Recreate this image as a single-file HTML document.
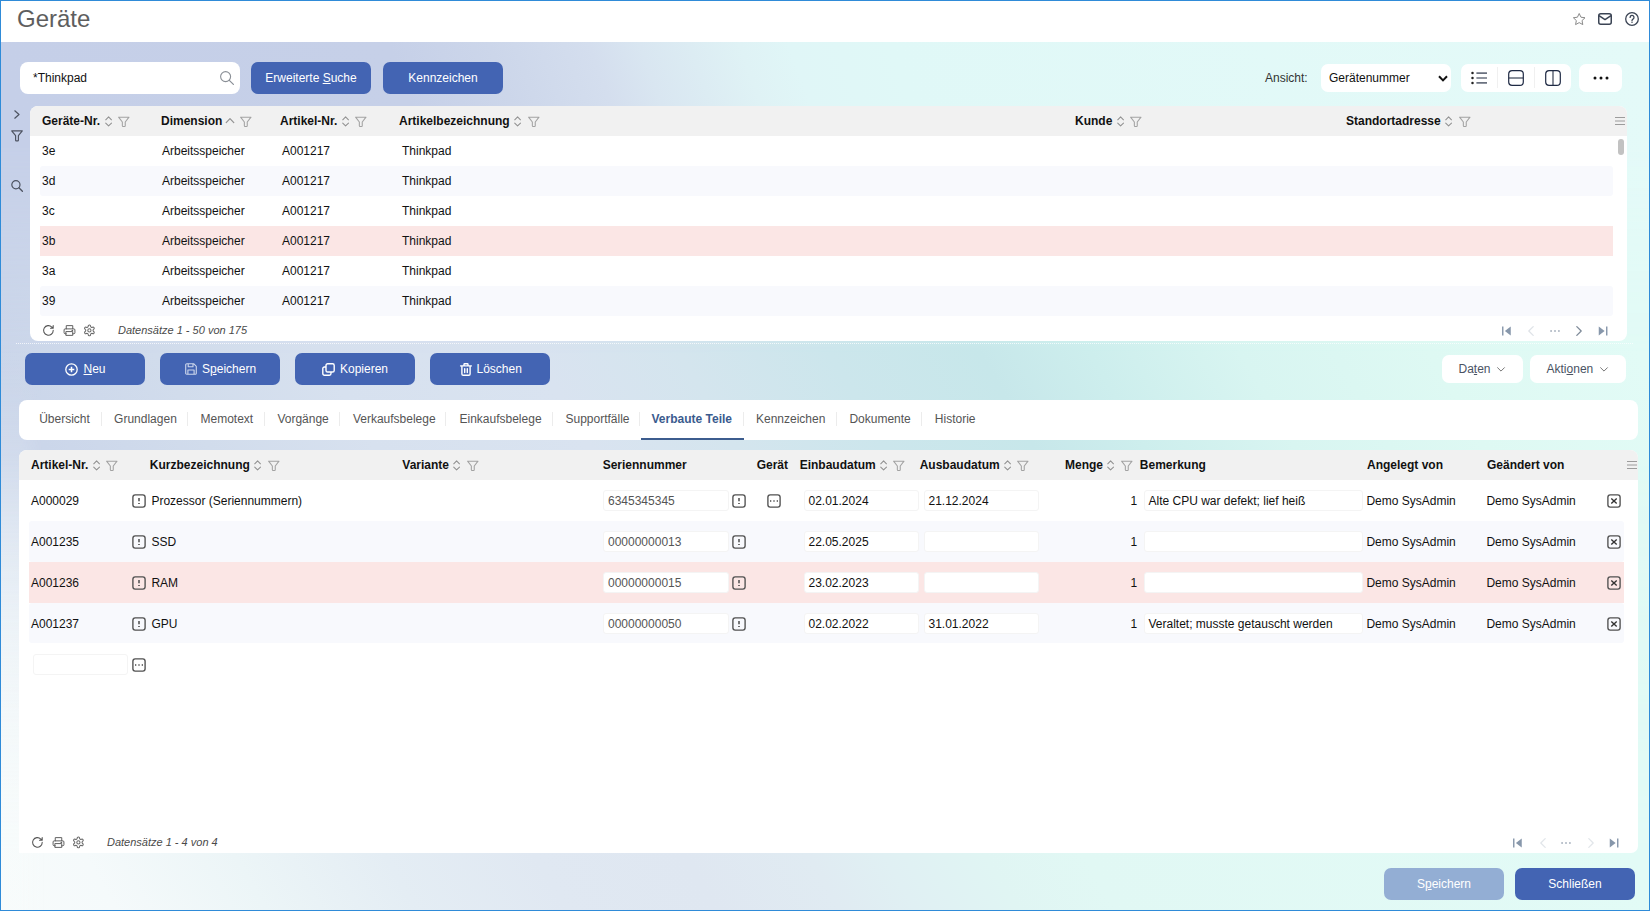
<!DOCTYPE html>
<html lang="de">
<head>
<meta charset="utf-8">
<title>Geräte</title>
<style>
*{box-sizing:border-box;margin:0;padding:0}
html,body{width:1650px;height:911px;overflow:hidden}
body{font-family:"Liberation Sans",Arial,sans-serif;font-size:12px;color:#111;position:relative;background:#dfeaf2}
.abs{position:absolute}
#bgw{position:absolute;left:0;top:42px;width:1650px;height:869px;overflow:hidden}
#bg,#bgt,#bgb{position:absolute;left:-700px;top:0;width:3050px;height:869px;transform:skewX(30deg)}
#bg{transform-origin:0 328px;background:linear-gradient(90deg,#cbd6ea 700px,#d1dcec 865px,#d7e1ef 1030px,#d9e3f0 1245px,#d4e5ee 1390px,#cce6ec 1540px,#c7e7ea 1690px,#cdeeed 1800px,#d8f5f1 1950px,#def9f3 2140px,#e2fbf6 2350px)}
#bgt{transform:skewX(20deg);transform-origin:0 32px;background:linear-gradient(90deg,#c5cfe8 700px,#c6d0e8 1100px,#ccd6ea 1200px,#d4deee 1300px,#d9e6f1 1350px,#dcecf3 1400px,#dff2f5 1450px,#e0f6f7 1500px,#e0f8f7 1600px,#e4faf8 2350px);
-webkit-mask-image:linear-gradient(180deg,#000 0%,#000 12%,rgba(0,0,0,0) 36%);mask-image:linear-gradient(180deg,#000 0%,#000 12%,rgba(0,0,0,0) 36%)}
#bgb{transform-origin:0 840px;background:linear-gradient(90deg,#f7fbfb 700px,#f5fafb 800px,#ecf5f7 950px,#e4edf4 1100px,#e0e8f2 1250px,#dfe7f1 1400px,#e0ebf2 1525px,#e0f0f3 1600px,#e0f5f3 1700px,#e1f8f4 1800px,#e2fbf6 2350px);
-webkit-mask-image:linear-gradient(180deg,rgba(0,0,0,0) 48%,#000 93%);mask-image:linear-gradient(180deg,rgba(0,0,0,0) 48%,#000 93%)}
#bgl{position:absolute;left:0;top:298px;width:44px;height:571px;background:linear-gradient(180deg,rgba(245,249,251,0) 10px,rgba(245,249,251,.05) 60px,rgba(245,249,251,.14) 110px,rgba(245,249,251,.3) 160px,rgba(245,249,251,.45) 210px,rgba(247,251,251,.68) 310px,rgba(247,251,251,.8) 410px,rgba(247,251,251,.9) 510px,rgba(247,251,251,.9) 571px);-webkit-mask-image:linear-gradient(90deg,#000 0,#000 45%,rgba(0,0,0,0) 100%);mask-image:linear-gradient(90deg,#000 0,#000 45%,rgba(0,0,0,0) 100%)}
#hdr{position:absolute;left:0;top:0;width:1650px;height:42px;background:#fff}
#frame{position:absolute;left:0;top:0;width:1650px;height:911px;border:1px solid #2f8bd8;pointer-events:none;z-index:50}
h1{position:absolute;left:17px;top:4px;font-size:24px;font-weight:normal;color:#5e5e5e;line-height:30px}
.btn{position:absolute;height:32px;border-radius:7px;background:#4364b3;color:#fff;font-size:12px;line-height:32px;white-space:nowrap}
.btn.c{text-align:center}
.btn.dis{background:#93aed4}
.btn span,.wbtn span{position:absolute;top:0}
.wbtn{position:absolute;height:28px;border-radius:7px;background:#fff;color:#4a5363;font-size:12px;line-height:28px;white-space:nowrap}
u{text-decoration:underline;text-underline-offset:1px;text-decoration-thickness:1px}
.panel{position:absolute;background:#fff;border-radius:8px;overflow:hidden}
.gh{position:absolute;left:0;top:0;right:0;height:30px;background:#f1f1f1}
.th{position:absolute;top:0;height:30px;line-height:30px;font-weight:bold;font-size:12px;color:#111;white-space:nowrap}
.row{position:absolute;left:10px;height:30px;line-height:30px}
.row span,.row2 span{position:absolute;top:0;white-space:nowrap}
.row2 span{top:1px}
.alt{background:#f8f9fd;border-radius:3px}
.sel{background:#fbe6e5}
.row2{position:absolute;left:10px;height:41px;line-height:41px}
.inp{position:absolute;height:21px;background:#fff;border:1px solid #f4f4f4;border-radius:3px;line-height:21px;padding-left:4px;white-space:nowrap;overflow:hidden;top:10px}
.foot{position:absolute;font-style:italic;color:#4a4a4a;font-size:11px;white-space:nowrap;line-height:14px}
svg{position:absolute;overflow:visible}
.tab{position:absolute;top:0;height:40px;line-height:38px;color:#555;font-size:12px;white-space:nowrap}
.tab.act{font-weight:bold;color:#3b5b8e}
.sep{position:absolute;top:12px;width:1px;height:14px;background:#ececec}
</style>
</head>
<body>

<svg width="0" height="0" style="position:absolute">
<defs>
<symbol id="i-sort" viewBox="0 0 8 12" overflow="visible"><path d="M0.8 4.2 L4 1 L7.2 4.2 M0.8 7.8 L4 11 L7.2 7.8" fill="none" stroke="#929292" stroke-width="1.2" stroke-linecap="round" stroke-linejoin="round"/></symbol>
<symbol id="i-asc" viewBox="0 0 8 12" overflow="visible"><path d="M0.2 7.6 L4 3.6 L7.8 7.6" fill="none" stroke="#929292" stroke-width="1.2" stroke-linecap="round" stroke-linejoin="round"/></symbol>
<symbol id="i-filt" viewBox="0 0 12 12" overflow="visible"><path d="M0.6 1.2 H11.4 L7.5 6.2 V10 Q7.5 10.8 6.7 10.8 H5.3 Q4.5 10.8 4.5 10 V6.2 Z" fill="none" stroke="#a2a2a2" stroke-width="1.1" stroke-linejoin="round"/></symbol>
<symbol id="i-ham" viewBox="0 0 10 8" overflow="visible"><path d="M0 0.5 H10 M0 4 H10 M0 7.5 H10" fill="none" stroke="#9c9c9c" stroke-width="1"/></symbol>
<symbol id="i-refresh" viewBox="0 0 24 24" overflow="visible"><path d="M21 12a9 9 0 1 1-2.64-6.36L21 8 M21 3v5h-5" fill="none" stroke="#555" stroke-width="2" stroke-linecap="round" stroke-linejoin="round"/></symbol>
<symbol id="i-print" viewBox="0 0 24 24" overflow="visible"><path d="M6 9V3h12v6 M6 18H4a2 2 0 0 1-2-2v-5a2 2 0 0 1 2-2h16a2 2 0 0 1 2 2v5a2 2 0 0 1-2 2h-2 M6 14h12v7H6z M16.5 12h1.5" fill="none" stroke="#5c5c5c" stroke-width="1.8" stroke-linecap="round" stroke-linejoin="round"/></symbol>
<symbol id="i-gear" viewBox="0 0 24 24" overflow="visible"><path d="M12.22 2h-.44a2 2 0 0 0-2 2v.18a2 2 0 0 1-1 1.73l-.43.25a2 2 0 0 1-2 0l-.15-.08a2 2 0 0 0-2.73.73l-.22.38a2 2 0 0 0 .73 2.73l.15.1a2 2 0 0 1 1 1.72v.51a2 2 0 0 1-1 1.74l-.15.09a2 2 0 0 0-.73 2.73l.22.38a2 2 0 0 0 2.73.73l.15-.08a2 2 0 0 1 2 0l.43.25a2 2 0 0 1 1 1.73V20a2 2 0 0 0 2 2h.44a2 2 0 0 0 2-2v-.18a2 2 0 0 1 1-1.73l.43-.25a2 2 0 0 1 2 0l.15.08a2 2 0 0 0 2.73-.73l.22-.39a2 2 0 0 0-.73-2.73l-.15-.08a2 2 0 0 1-1-1.74v-.5a2 2 0 0 1 1-1.74l.15-.09a2 2 0 0 0 .73-2.73l-.22-.38a2 2 0 0 0-2.73-.73l-.15.08a2 2 0 0 1-2 0l-.43-.25a2 2 0 0 1-1-1.73V4a2 2 0 0 0-2-2z" fill="none" stroke="#6a6a6a" stroke-width="2" stroke-linejoin="round"/><circle cx="12" cy="12" r="3" fill="none" stroke="#6a6a6a" stroke-width="2"/></symbol>
<symbol id="i-first" viewBox="0 0 10 10" overflow="visible"><path d="M0.8 0.3 V9.7" stroke="#8797ab" stroke-width="1.5" fill="none"/><path d="M9.2 0.3 V9.7 L3 5 Z" fill="#8797ab"/></symbol>
<symbol id="i-last" viewBox="0 0 10 10" overflow="visible"><path d="M9.2 0.3 V9.7" stroke="#8797ab" stroke-width="1.5" fill="none"/><path d="M0.8 0.3 V9.7 L7 5 Z" fill="#8797ab"/></symbol>
<symbol id="i-info" viewBox="0 0 14 14" overflow="visible"><rect x="0.9" y="0.9" width="12.2" height="12.2" rx="2.3" fill="none" stroke="#505050" stroke-width="1.35"/><path d="M7 3.9 V7.3" stroke="#4a4a4a" stroke-width="1.5" fill="none"/><path d="M6.2 9.5 H7.8" stroke="#4a4a4a" stroke-width="1.1" fill="none"/></symbol>
<symbol id="i-more" viewBox="0 0 14 14" overflow="visible"><rect x="0.9" y="0.9" width="12.2" height="12.2" rx="2.3" fill="none" stroke="#505050" stroke-width="1.35"/><path d="M3 7 H4.3 M6.35 7 H7.65 M9.7 7 H11" stroke="#4a4a4a" stroke-width="1.4" fill="none"/></symbol>
<symbol id="i-xbox" viewBox="0 0 14 14" overflow="visible"><rect x="0.9" y="0.9" width="12.2" height="12.2" rx="2.3" fill="none" stroke="#505050" stroke-width="1.35"/><path d="M4.3 4.6 L9.7 9.6 M9.7 4.6 L4.3 9.6" stroke="#333" stroke-width="1.4" fill="none"/></symbol>
</defs>
</svg>

<div id="bgw"><div id="bg"></div><div id="bgt"></div><div id="bgb"></div><div id="bgl"></div></div>
<div id="hdr"></div>
<h1>Geräte</h1>
<svg style="left:1572.3px;top:11.6px" width="14.4" height="14.4" viewBox="0 0 24 24"><path d="M12 2.5l2.95 6.2 6.75.9-4.95 4.7 1.25 6.7L12 17.7 5.99 21l1.25-6.7L2.3 9.6l6.75-.9z" fill="none" stroke="#7d7d7d" stroke-width="1.5" stroke-linejoin="round"/></svg>
<svg style="left:1598px;top:13px" width="14" height="12" viewBox="0 0 14 12"><rect x="0.75" y="0.75" width="12.5" height="10.5" rx="2" fill="none" stroke="#3b4454" stroke-width="1.5"/><path d="M1 2.6 L7 6.6 L13 2.6" fill="none" stroke="#3b4454" stroke-width="1.5" stroke-linejoin="round"/></svg>
<svg style="left:1625px;top:12px" width="14" height="14" viewBox="0 0 14 14"><circle cx="7" cy="7" r="6.3" fill="none" stroke="#3b4454" stroke-width="1.3"/><path d="M5.1 5.4a1.95 1.95 0 1 1 2.9 1.7c-.6.35-1 .75-1 1.5" fill="none" stroke="#3b4454" stroke-width="1.3" stroke-linecap="round"/><circle cx="7" cy="10.3" r="0.75" fill="#3b4454"/></svg>
<div class="abs" style="left:20px;top:62px;width:220px;height:32px;background:#fff;border-radius:8px;line-height:32px;padding-left:13px;color:#111">*Thinkpad</div>
<svg style="left:219px;top:70px" width="16" height="16" viewBox="0 0 16 16"><circle cx="6.6" cy="6.6" r="5" fill="none" stroke="#8a8f96" stroke-width="1.1"/><path d="M10.3 10.3 L14.4 14.4" stroke="#8a8f96" stroke-width="1.2" stroke-linecap="round"/></svg>
<div class="btn c" style="left:251px;top:62px;width:120px">Erweiterte <u>S</u>uche</div>
<div class="btn c" style="left:383px;top:62px;width:120px">Kennzeichen</div>
<div class="abs" style="left:1265px;top:71px;line-height:14px;color:#333">Ansicht:</div>
<div class="abs" style="left:1321px;top:64px;width:130px;height:28px;background:#fff;border-radius:7px;line-height:28px;padding-left:8px;color:#111">Gerätenummer</div>
<svg style="left:1438px;top:75px" width="10" height="7" viewBox="0 0 10 7"><path d="M1 1.2 L5 5.4 L9 1.2" fill="none" stroke="#111" stroke-width="2" stroke-linejoin="miter"/></svg>
<div class="abs" style="left:1461px;top:64px;width:110px;height:28px;background:#fff;border-radius:7px"></div>
<div class="abs" style="left:1497px;top:67px;width:1px;height:21px;background:#f0f0f0"></div><div class="abs" style="left:1534px;top:67px;width:1px;height:21px;background:#f0f0f0"></div>
<svg style="left:1471px;top:71px" width="17" height="14" viewBox="0 0 17 14"><path d="M5.4 2.1 H16 M5.4 7 H16 M5.4 11.9 H16" stroke="#6b7280" stroke-width="1.6" fill="none"/><circle cx="1.5" cy="2.1" r="1.25" fill="#222"/><circle cx="1.5" cy="7" r="1.25" fill="#222"/><circle cx="1.5" cy="11.9" r="1.25" fill="#222"/></svg>
<svg style="left:1508px;top:70px" width="16" height="16" viewBox="0 0 16 16"><path d="M0.8 8 H15.2" stroke="#6b7280" stroke-width="1.6" fill="none"/><rect x="0.7" y="0.7" width="14.6" height="14.6" rx="3.4" fill="none" stroke="#1f2a44" stroke-width="1.2"/></svg>
<svg style="left:1545px;top:70px" width="16" height="16" viewBox="0 0 16 16"><path d="M8 0.8 V15.2" stroke="#6b7280" stroke-width="1.6" fill="none"/><rect x="0.7" y="0.7" width="14.6" height="14.6" rx="3.4" fill="none" stroke="#1f2a44" stroke-width="1.2"/></svg>
<div class="abs" style="left:1579px;top:64px;width:43px;height:28px;background:#fff;border-radius:7px"></div>
<svg style="left:1593px;top:76px" width="16" height="4" viewBox="0 0 16 4"><circle cx="2" cy="2" r="1.5" fill="#111"/><circle cx="8" cy="2" r="1.5" fill="#111"/><circle cx="14" cy="2" r="1.5" fill="#111"/></svg>
<svg style="left:14px;top:109.5px" width="6" height="9" viewBox="0 0 6 9"><path d="M0.8 0.8 L5 4.5 L0.8 8.2" fill="none" stroke="#4d5361" stroke-width="1.2" stroke-linecap="round" stroke-linejoin="round"/></svg>
<svg style="left:11px;top:130px" width="12" height="12" viewBox="0 0 12 12"><path d="M0.7 0.9 H11.3 L7.4 5.6 V10.2 Q7.4 10.9 6.7 10.9 H5.3 Q4.6 10.9 4.6 10.2 V5.6 Z" fill="none" stroke="#4d5361" stroke-width="1.15" stroke-linejoin="round"/></svg>
<svg style="left:11px;top:180px" width="12" height="12" viewBox="0 0 12 12"><circle cx="4.9" cy="4.7" r="4.1" fill="none" stroke="#4d5361" stroke-width="1.2"/><path d="M7.9 7.7 L11.4 11.2" stroke="#4d5361" stroke-width="1.3" stroke-linecap="round"/></svg>
<div class="panel" id="g1" style="left:30px;top:106px;width:1597px;height:235px">
<div class="gh"></div>
<div class="th" id="h1_0" style="left:12px">Geräte-Nr.</div>
<div class="th" id="h1_1" style="left:131px">Dimension</div>
<div class="th" id="h1_2" style="left:250px">Artikel-Nr.</div>
<div class="th" id="h1_3" style="left:369px">Artikelbezeichnung</div>
<div class="th" id="h1_4" style="left:1045px">Kunde</div>
<div class="th" id="h1_5" style="left:1316px">Standortadresse</div>
<svg style="left:74.6px;top:9.599999999999994px" width="7.2" height="10.8" ><use href="#i-sort"/></svg>
<svg style="left:88.0px;top:9.5px" width="11.6" height="11.6" ><use href="#i-filt"/></svg>
<svg style="left:196.10000000000002px;top:9px" width="8" height="12" ><use href="#i-asc"/></svg>
<svg style="left:209.9px;top:9.5px" width="11.6" height="11.6" ><use href="#i-filt"/></svg>
<svg style="left:312.0px;top:9.599999999999994px" width="7.2" height="10.8" ><use href="#i-sort"/></svg>
<svg style="left:325.4px;top:9.5px" width="11.6" height="11.6" ><use href="#i-filt"/></svg>
<svg style="left:484.29999999999995px;top:9.599999999999994px" width="7.2" height="10.8" ><use href="#i-sort"/></svg>
<svg style="left:497.70000000000005px;top:9.5px" width="11.6" height="11.6" ><use href="#i-filt"/></svg>
<svg style="left:1086.8999999999999px;top:9.599999999999994px" width="7.2" height="10.8" ><use href="#i-sort"/></svg>
<svg style="left:1100.3px;top:9.5px" width="11.6" height="11.6" ><use href="#i-filt"/></svg>
<svg style="left:1415.3px;top:9.599999999999994px" width="7.2" height="10.8" ><use href="#i-sort"/></svg>
<svg style="left:1428.7px;top:9.5px" width="11.6" height="11.6" ><use href="#i-filt"/></svg>
<svg style="left:1585px;top:11.0px" width="10" height="8" ><use href="#i-ham"/></svg>
<div class="row" style="top:30px;width:1573px"><span style="left:2px">3e</span><span style="left:122px">Arbeitsspeicher</span><span style="left:242px">A001217</span><span style="left:362px">Thinkpad</span></div>
<div class="row alt" style="top:60px;width:1573px"><span style="left:2px">3d</span><span style="left:122px">Arbeitsspeicher</span><span style="left:242px">A001217</span><span style="left:362px">Thinkpad</span></div>
<div class="row" style="top:90px;width:1573px"><span style="left:2px">3c</span><span style="left:122px">Arbeitsspeicher</span><span style="left:242px">A001217</span><span style="left:362px">Thinkpad</span></div>
<div class="row sel" style="top:120px;width:1573px"><span style="left:2px">3b</span><span style="left:122px">Arbeitsspeicher</span><span style="left:242px">A001217</span><span style="left:362px">Thinkpad</span></div>
<div class="row" style="top:150px;width:1573px"><span style="left:2px">3a</span><span style="left:122px">Arbeitsspeicher</span><span style="left:242px">A001217</span><span style="left:362px">Thinkpad</span></div>
<div class="row alt" style="top:180px;width:1573px"><span style="left:2px">39</span><span style="left:122px">Arbeitsspeicher</span><span style="left:242px">A001217</span><span style="left:362px">Thinkpad</span></div>
<div class="abs" style="left:1588px;top:33px;width:6px;height:16px;border-radius:3px;background:#c2c2c2"></div>
<svg style="left:12.200000000000003px;top:217.60000000000002px" width="12.8" height="12.8" ><use href="#i-refresh"/></svg>
<svg style="left:32.5px;top:217.5px" width="13" height="13" ><use href="#i-print"/></svg>
<svg style="left:52.599999999999994px;top:217.60000000000002px" width="12.8" height="12.8" ><use href="#i-gear"/></svg>
<div class="foot" id="f1" style="left:88px;top:217px">Datensätze 1 - 50 von 175</div>
<svg style="left:1472px;top:219.5px" width="9.5" height="10" ><use href="#i-first"/></svg>
<svg style="left:1498px;top:219.5px" width="6" height="10" viewBox="0 0 6 10"><path d="M5.2 0.6 L0.8 5 L5.2 9.4" fill="none" stroke="#dfe3e8" stroke-width="1.3" stroke-linecap="round" stroke-linejoin="round"/></svg>
<svg style="left:1520px;top:223.5px" width="10" height="2" viewBox="0 0 10 2"><path d="M0.3 1 H1.9 M4.2 1 H5.8 M8.1 1 H9.7" stroke="#9aa5b4" stroke-width="1.5" fill="none"/></svg>
<svg style="left:1546px;top:219.5px" width="6" height="10" viewBox="0 0 6 10"><path d="M0.8 0.6 L5.2 5 L0.8 9.4" fill="none" stroke="#7f8b99" stroke-width="1.3" stroke-linecap="round" stroke-linejoin="round"/></svg>
<svg style="left:1568px;top:219.5px" width="9.5" height="10" ><use href="#i-last"/></svg>
</div>
<div class="abs" style="left:16px;top:343px;width:1618px;height:1px;background:repeating-linear-gradient(90deg,rgba(255,255,255,.75) 0 1px,rgba(255,255,255,0) 1px 2px)"></div>
<div class="btn" style="left:25px;top:353px;width:120px"><span style="left:58.5px"><u>N</u>eu</span></div>
<svg style="left:65.3px;top:362.5px" width="13" height="13" viewBox="0 0 13 13"><circle cx="6.5" cy="6.5" r="5.7" fill="none" stroke="#fff" stroke-width="1.3"/><path d="M6.5 3.7 V9.3 M3.7 6.5 H9.3" stroke="#fff" stroke-width="1.5" fill="none"/></svg>
<div class="btn" style="left:160px;top:353px;width:120px"><span style="left:42px">S<u>p</u>eichern</span></div>
<svg style="left:185px;top:363px" width="12" height="12" viewBox="0 0 12 12"><path d="M1.8 0.7 H8.6 L11.3 3.4 V10.2 a1.1 1.1 0 0 1 -1.1 1.1 H1.8 a1.1 1.1 0 0 1 -1.1 -1.1 V1.8 a1.1 1.1 0 0 1 1.1 -1.1 Z M3.2 0.9 V3.8 H8 V0.9 M2.9 11.2 V7 H9.1 V11.2" fill="none" stroke="#cdd6ec" stroke-width="1.1" stroke-linejoin="round"/></svg>
<div class="btn" style="left:295px;top:353px;width:120px"><span style="left:45px">Kopieren</span></div>
<svg style="left:322px;top:362.5px" width="13" height="13" viewBox="0 0 13 13"><rect x="4" y="0.8" width="8.2" height="8.2" rx="1.6" fill="none" stroke="#fff" stroke-width="1.4"/><path d="M4 4 H2.4 a1.6 1.6 0 0 0 -1.6 1.6 V10.6 a1.6 1.6 0 0 0 1.6 1.6 H7.4 a1.6 1.6 0 0 0 1.6 -1.6 V9" fill="none" stroke="#fff" stroke-width="1.4"/></svg>
<div class="btn" style="left:430px;top:353px;width:120px"><span style="left:46.5px">Löschen</span></div>
<svg style="left:460px;top:362.5px" width="12" height="13" viewBox="0 0 12 13"><path d="M0.6 2.9 H11.4 M4 2.7 V1.4 a0.7 0.7 0 0 1 .7 -.7 H7.3 a0.7 0.7 0 0 1 .7 .7 V2.7 M1.9 3 V11 a1.3 1.3 0 0 0 1.3 1.3 H8.8 a1.3 1.3 0 0 0 1.3 -1.3 V3 M4.7 5.6 V9.6 M7.3 5.6 V9.6" fill="none" stroke="#fff" stroke-width="1.4" stroke-linecap="round" stroke-linejoin="round"/></svg>
<div class="wbtn" style="left:1442px;top:355px;width:81px"><span style="left:16.5px">Da<u>t</u>en</span></div>
<svg style="left:1497px;top:367px" width="8" height="5" viewBox="0 0 8 5"><path d="M0.6 0.7 L4 4.1 L7.4 0.7" fill="none" stroke="#777" stroke-width="1" stroke-linecap="round" stroke-linejoin="round"/></svg>
<div class="wbtn" style="left:1530px;top:355px;width:96px"><span style="left:16.5px">Akti<u>o</u>nen</span></div>
<svg style="left:1599.5px;top:367px" width="8" height="5" viewBox="0 0 8 5"><path d="M0.6 0.7 L4 4.1 L7.4 0.7" fill="none" stroke="#777" stroke-width="1" stroke-linecap="round" stroke-linejoin="round"/></svg>
<div class="panel" id="tabs" style="left:19px;top:400px;width:1619px;height:40px">
<div class="tab" id="t0" style="left:20.2px">Übersicht</div>
<div class="sep" style="left:82px"></div>
<div class="tab" id="t1" style="left:95.1px">Grundlagen</div>
<div class="sep" style="left:168px"></div>
<div class="tab" id="t2" style="left:181.5px">Memotext</div>
<div class="sep" style="left:245px"></div>
<div class="tab" id="t3" style="left:258.4px">Vorgänge</div>
<div class="sep" style="left:320px"></div>
<div class="tab" id="t4" style="left:333.9px">Verkaufsbelege</div>
<div class="sep" style="left:426px"></div>
<div class="tab" id="t5" style="left:440.5px">Einkaufsbelege</div>
<div class="sep" style="left:533px"></div>
<div class="tab" id="t6" style="left:546.5px">Supportfälle</div>
<div class="sep" style="left:620px"></div>
<div class="tab act" id="t7" style="left:632.5px">Verbaute Teile</div>
<div class="sep" style="left:724px"></div>
<div class="tab" id="t8" style="left:737.0px">Kennzeichen</div>
<div class="sep" style="left:817px"></div>
<div class="tab" id="t9" style="left:830.4px">Dokumente</div>
<div class="sep" style="left:902px"></div>
<div class="tab" id="t10" style="left:915.8px">Historie</div>
<div class="abs" style="left:622px;top:37.5px;width:103px;height:2.5px;background:#3c5c8e"></div>
</div>
<div class="panel" id="g2" style="left:19px;top:450px;width:1619px;height:403px;border-radius:8px 8px 7px 0">
<div class="gh"></div>
<div class="th" id="h2_0" style="left:12.0px">Artikel-Nr.</div>
<div class="th" id="h2_1" style="left:130.8px">Kurzbezeichnung</div>
<div class="th" id="h2_2" style="left:383.3px">Variante</div>
<div class="th" id="h2_3" style="left:583.7px">Seriennummer</div>
<div class="th" id="h2_4" style="left:737.7px">Gerät</div>
<div class="th" id="h2_5" style="left:780.7px">Einbaudatum</div>
<div class="th" id="h2_6" style="left:900.7px">Ausbaudatum</div>
<div class="th" id="h2_7" style="left:1046.0px">Menge</div>
<div class="th" id="h2_8" style="left:1120.8px">Bemerkung</div>
<div class="th" id="h2_9" style="left:1348.0px">Angelegt von</div>
<div class="th" id="h2_10" style="left:1468.0px">Geändert von</div>
<svg style="left:73.7px;top:9.600000000000023px" width="7.2" height="10.8" ><use href="#i-sort"/></svg>
<svg style="left:87.10000000000001px;top:9.5px" width="11.6" height="11.6" ><use href="#i-filt"/></svg>
<svg style="left:235.10000000000002px;top:9.600000000000023px" width="7.2" height="10.8" ><use href="#i-sort"/></svg>
<svg style="left:248.5px;top:9.5px" width="11.6" height="11.6" ><use href="#i-filt"/></svg>
<svg style="left:434.3px;top:9.600000000000023px" width="7.2" height="10.8" ><use href="#i-sort"/></svg>
<svg style="left:447.7px;top:9.5px" width="11.6" height="11.6" ><use href="#i-filt"/></svg>
<svg style="left:861.0px;top:9.600000000000023px" width="7.2" height="10.8" ><use href="#i-sort"/></svg>
<svg style="left:874.4000000000001px;top:9.5px" width="11.6" height="11.6" ><use href="#i-filt"/></svg>
<svg style="left:985.0px;top:9.600000000000023px" width="7.2" height="10.8" ><use href="#i-sort"/></svg>
<svg style="left:998.4000000000001px;top:9.5px" width="11.6" height="11.6" ><use href="#i-filt"/></svg>
<svg style="left:1088.3px;top:9.600000000000023px" width="7.2" height="10.8" ><use href="#i-sort"/></svg>
<svg style="left:1101.7px;top:9.5px" width="11.6" height="11.6" ><use href="#i-filt"/></svg>
<svg style="left:1607.5px;top:11px" width="10" height="8" ><use href="#i-ham"/></svg>
<div class="row2 " style="top:30px;height:41px;width:1595px">
<span style="left:2px">A000029</span>
<svg style="left:103.30000000000001px;top:13.8px" width="14" height="14" ><use href="#i-info"/></svg>
<span style="left:122.4px">Prozessor (Seriennummern)</span>
<div class="inp" style="left:574px;width:126px;color:#555">6345345345</div>
<svg style="left:703.3px;top:13.8px" width="14" height="14" ><use href="#i-info"/></svg>
<svg style="left:738.3px;top:13.8px" width="14" height="14" ><use href="#i-more"/></svg>
<div class="inp" style="left:774.5px;width:115px">02.01.2024</div>
<div class="inp" style="left:894.5px;width:115px">21.12.2024</div>
<span style="left:1101.5px">1</span>
<div class="inp" style="left:1114.5px;width:219px">Alte CPU war defekt; lief heiß</div>
<span style="left:1337.4px">Demo SysAdmin</span>
<span style="left:1457.4px">Demo SysAdmin</span>
<svg style="left:1578.3px;top:13.8px" width="14" height="14" ><use href="#i-xbox"/></svg>
</div>
<div class="row2 alt" style="top:71px;height:41px;width:1595px">
<span style="left:2px">A001235</span>
<svg style="left:103.30000000000001px;top:13.8px" width="14" height="14" ><use href="#i-info"/></svg>
<span style="left:122.4px">SSD</span>
<div class="inp" style="left:574px;width:126px;color:#555">00000000013</div>
<svg style="left:703.3px;top:13.8px" width="14" height="14" ><use href="#i-info"/></svg>
<div class="inp" style="left:774.5px;width:115px">22.05.2025</div>
<div class="inp" style="left:894.5px;width:115px"></div>
<span style="left:1101.5px">1</span>
<div class="inp" style="left:1114.5px;width:219px"></div>
<span style="left:1337.4px">Demo SysAdmin</span>
<span style="left:1457.4px">Demo SysAdmin</span>
<svg style="left:1578.3px;top:13.8px" width="14" height="14" ><use href="#i-xbox"/></svg>
</div>
<div class="row2 sel" style="top:112px;height:41px;width:1595px">
<span style="left:2px">A001236</span>
<svg style="left:103.30000000000001px;top:13.8px" width="14" height="14" ><use href="#i-info"/></svg>
<span style="left:122.4px">RAM</span>
<div class="inp" style="left:574px;width:126px;color:#555">00000000015</div>
<svg style="left:703.3px;top:13.8px" width="14" height="14" ><use href="#i-info"/></svg>
<div class="inp" style="left:774.5px;width:115px">23.02.2023</div>
<div class="inp" style="left:894.5px;width:115px"></div>
<span style="left:1101.5px">1</span>
<div class="inp" style="left:1114.5px;width:219px"></div>
<span style="left:1337.4px">Demo SysAdmin</span>
<span style="left:1457.4px">Demo SysAdmin</span>
<svg style="left:1578.3px;top:13.8px" width="14" height="14" ><use href="#i-xbox"/></svg>
</div>
<div class="row2 alt" style="top:153px;height:40px;width:1595px">
<span style="left:2px">A001237</span>
<svg style="left:103.30000000000001px;top:13.8px" width="14" height="14" ><use href="#i-info"/></svg>
<span style="left:122.4px">GPU</span>
<div class="inp" style="left:574px;width:126px;color:#555">00000000050</div>
<svg style="left:703.3px;top:13.8px" width="14" height="14" ><use href="#i-info"/></svg>
<div class="inp" style="left:774.5px;width:115px">02.02.2022</div>
<div class="inp" style="left:894.5px;width:115px">31.01.2022</div>
<span style="left:1101.5px">1</span>
<div class="inp" style="left:1114.5px;width:219px">Veraltet; musste getauscht werden</div>
<span style="left:1337.4px">Demo SysAdmin</span>
<span style="left:1457.4px">Demo SysAdmin</span>
<svg style="left:1578.3px;top:13.8px" width="14" height="14" ><use href="#i-xbox"/></svg>
</div>
<div class="inp" style="left:14px;top:204px;width:95px;height:21px"></div>
<svg style="left:113.30000000000001px;top:208px" width="14" height="14" ><use href="#i-more"/></svg>
<svg style="left:12.2px;top:385.6px" width="12.8" height="12.8" ><use href="#i-refresh"/></svg>
<svg style="left:32.5px;top:385.5px" width="13" height="13" ><use href="#i-print"/></svg>
<svg style="left:52.599999999999994px;top:385.6px" width="12.8" height="12.8" ><use href="#i-gear"/></svg>
<div class="foot" id="f2" style="left:88px;top:385px">Datensätze 1 - 4 von 4</div>
<svg style="left:1494px;top:388px" width="9.5" height="10" ><use href="#i-first"/></svg>
<svg style="left:1520.5px;top:388px" width="6" height="10" viewBox="0 0 6 10"><path d="M5.2 0.6 L0.8 5 L5.2 9.4" fill="none" stroke="#e2e6ea" stroke-width="1.3" stroke-linecap="round" stroke-linejoin="round"/></svg>
<svg style="left:1542px;top:392px" width="10" height="2" viewBox="0 0 10 2"><path d="M0.3 1 H1.9 M4.2 1 H5.8 M8.1 1 H9.7" stroke="#9aa5b4" stroke-width="1.5" fill="none"/></svg>
<svg style="left:1568.5px;top:388px" width="6" height="10" viewBox="0 0 6 10"><path d="M0.8 0.6 L5.2 5 L0.8 9.4" fill="none" stroke="#e2e6ea" stroke-width="1.3" stroke-linecap="round" stroke-linejoin="round"/></svg>
<svg style="left:1590px;top:388px" width="9.5" height="10" ><use href="#i-last"/></svg>
</div>
<div class="btn dis c" style="left:1384px;top:868px;width:120px">S<u>p</u>eichern</div>
<div class="btn c" style="left:1515px;top:868px;width:120px">Schließen</div>
<div id="frame"></div>
</body>
</html>
